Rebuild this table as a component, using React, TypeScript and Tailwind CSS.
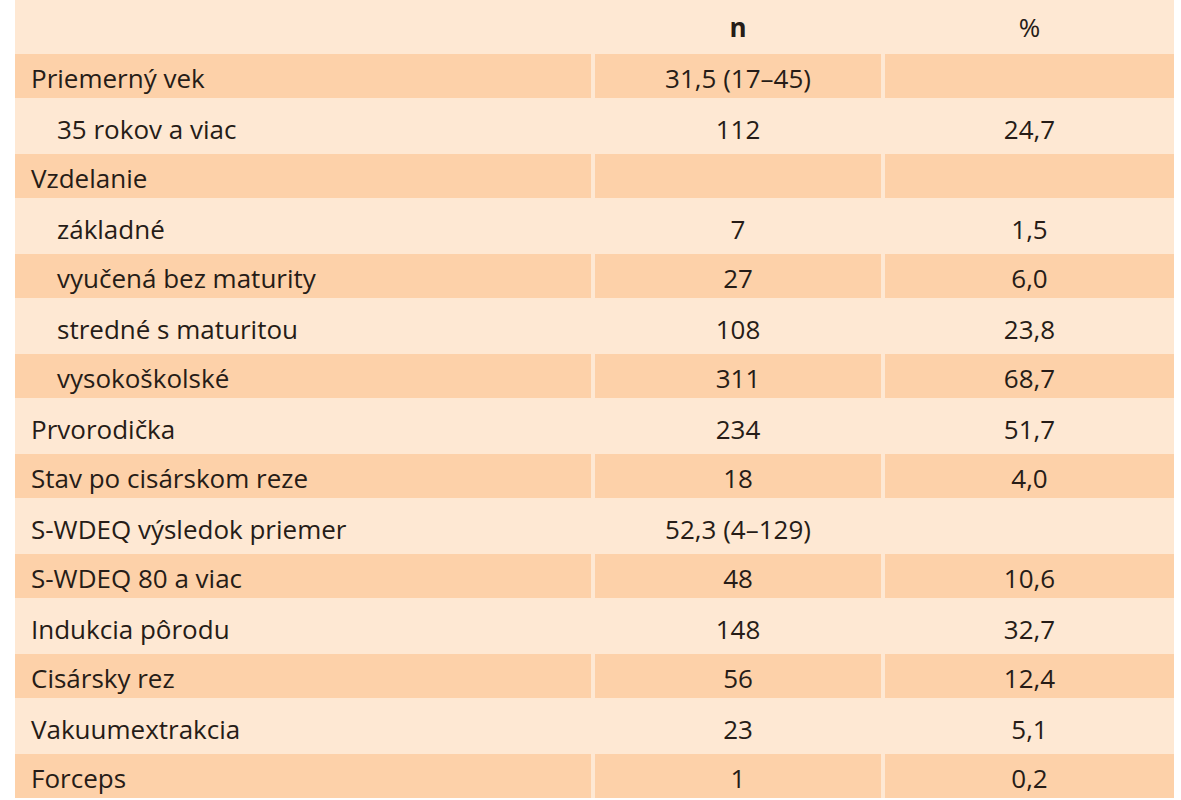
type Row = { label: string; n: string; pct: string; sub?: boolean };

const rows: Row[] = [
  { label: 'Priemerný vek', n: '31,5 (17–45)', pct: '' },
  { label: '35 rokov a viac', n: '112', pct: '24,7', sub: true },
  { label: 'Vzdelanie', n: '', pct: '' },
  { label: 'základné', n: '7', pct: '1,5', sub: true },
  { label: 'vyučená bez maturity', n: '27', pct: '6,0', sub: true },
  { label: 'stredné s maturitou', n: '108', pct: '23,8', sub: true },
  { label: 'vysokoškolské', n: '311', pct: '68,7', sub: true },
  { label: 'Prvorodička', n: '234', pct: '51,7' },
  { label: 'Stav po cisárskom reze', n: '18', pct: '4,0' },
  { label: 'S-WDEQ výsledok priemer', n: '52,3 (4–129)', pct: '' },
  { label: 'S-WDEQ 80 a viac', n: '48', pct: '10,6' },
  { label: 'Indukcia pôrodu', n: '148', pct: '32,7' },
  { label: 'Cisársky rez', n: '56', pct: '12,4' },
  { label: 'Vakuumextrakcia', n: '23', pct: '5,1' },
  { label: 'Forceps', n: '1', pct: '0,2' },
];

export default function App() {
  return (
    <main
      className="h-[800px] w-[1181px] overflow-hidden bg-white pl-[15px] text-[#261c17]"
      style={{ fontFamily: '"Open Sans", "Noto Sans", sans-serif' }}
    >
      <div className="w-[1159px] bg-[#fee8d3] text-[26px] leading-none">
        <div className="grid h-[54px] grid-cols-[576px_286px_289px] items-center gap-x-[4px]">
          <div />
          <div className="text-center font-bold">n</div>
          <div className="text-center">%</div>
        </div>
        {rows.map((r, i) => {
          const dark = i % 2 === 0;
          const cell = dark ? 'flex items-center bg-[#fdd1a9] pt-[3px]' : 'flex items-center pt-[5px]';
          return (
            <div
              key={r.label}
              className={`grid grid-cols-[576px_286px_289px] gap-x-[4px] ${dark ? 'h-[44px]' : 'h-[56px]'}`}
            >
              <div className={`${cell} ${r.sub ? 'pl-[42px]' : 'pl-[16px]'}`}>{r.label}</div>
              <div className={`${cell} justify-center`}>{r.n}</div>
              <div className={`${cell} justify-center`}>{r.pct}</div>
            </div>
          );
        })}
      </div>
    </main>
  );
}
